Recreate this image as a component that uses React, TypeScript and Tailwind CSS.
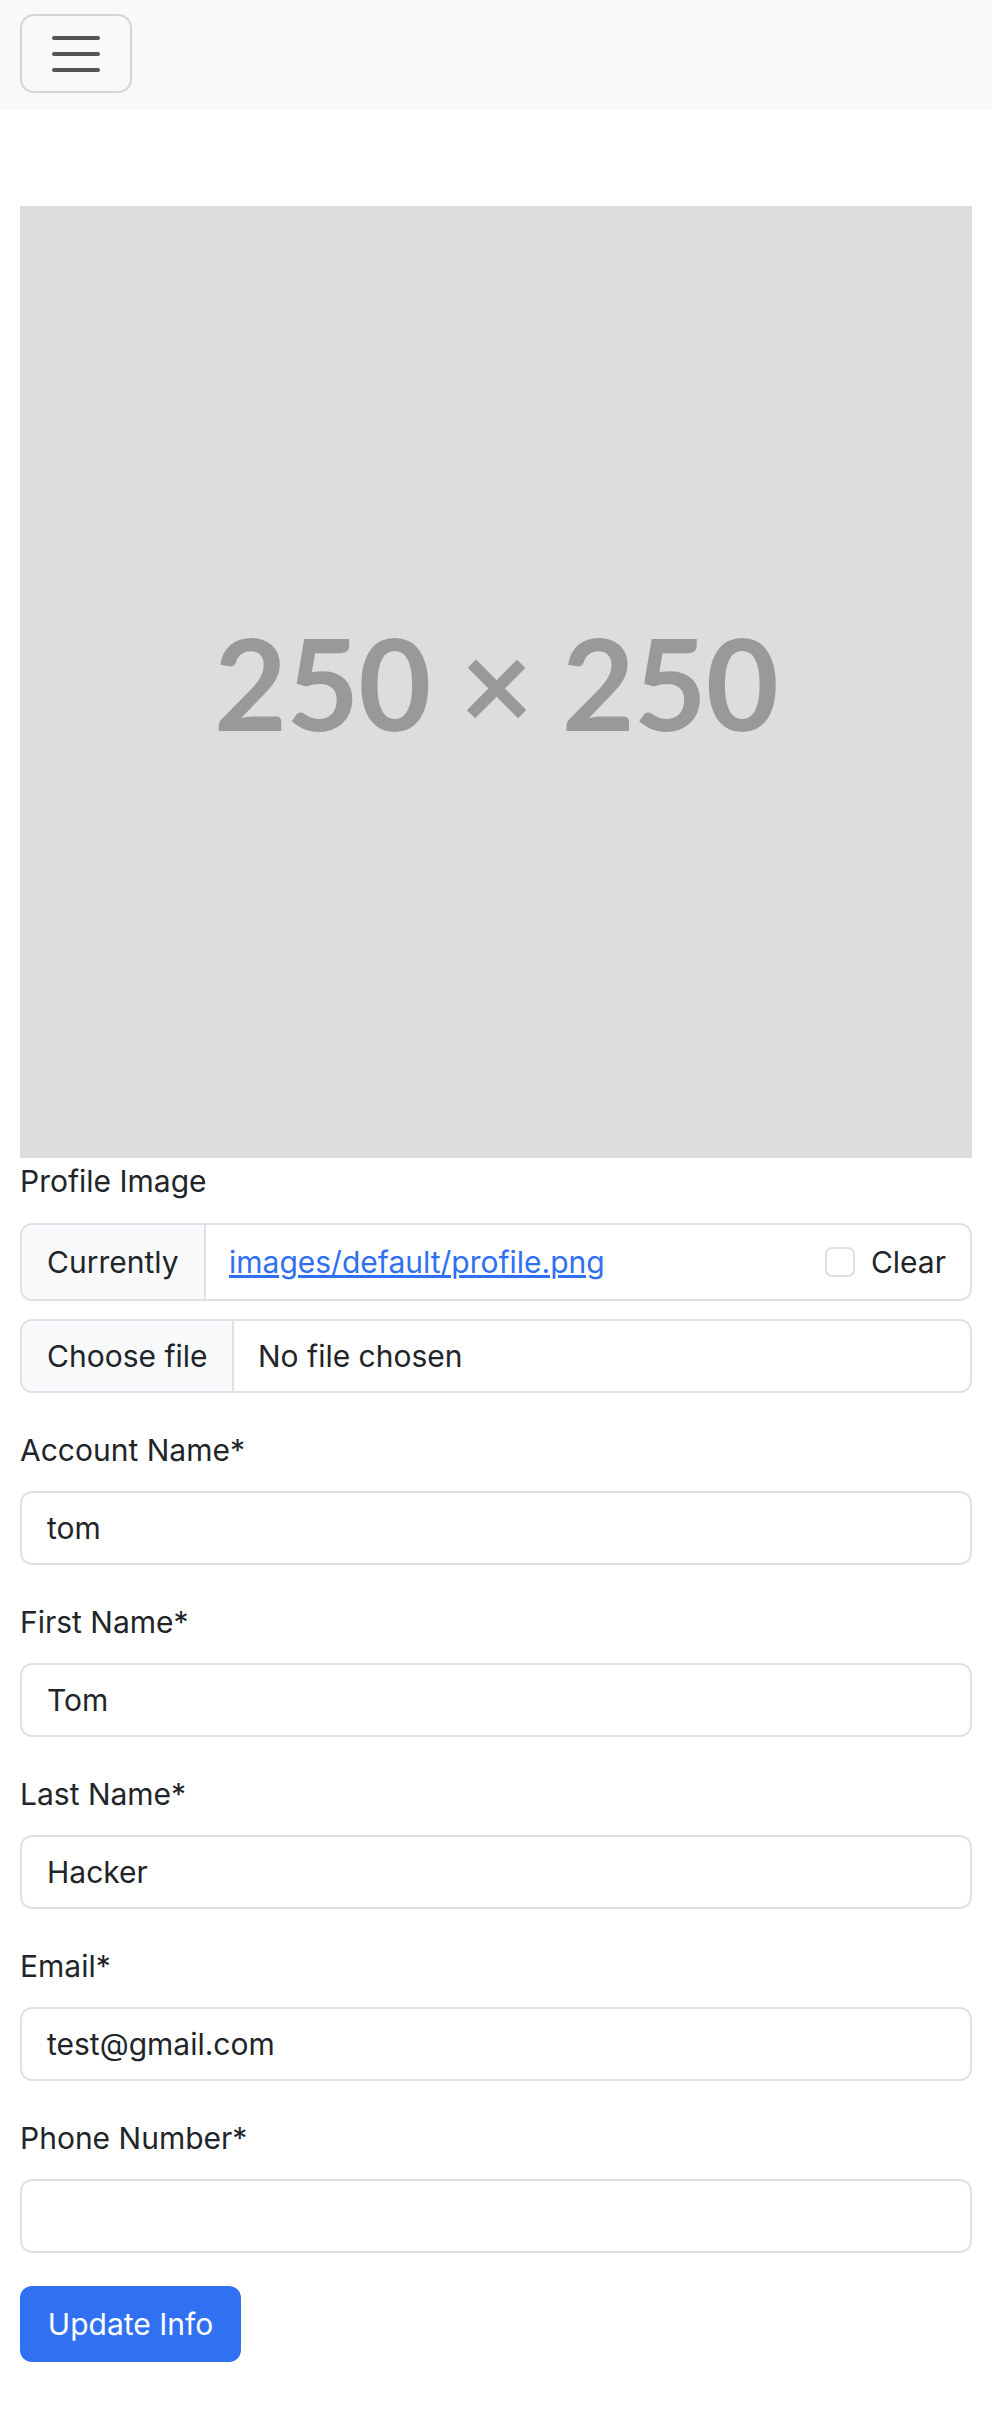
import React from "react";

const fields = [
  { label: "Account Name*", value: "tom" },
  { label: "First Name*", value: "Tom" },
  { label: "Last Name*", value: "Hacker" },
  { label: "Email*", value: "test@gmail.com" },
  { label: "Phone Number*", value: "" },
];

export default function App() {
  return (
    <div className="min-h-[2430px] bg-white font-['Inter',sans-serif] text-[30px] text-[#212529]">
      <nav className="h-[109px] bg-[#f8f9fa] px-5 pt-[14px]">
        <button className="flex h-[79px] w-[112px] flex-col items-center justify-center gap-[12px] rounded-[14px] border-2 border-[#d4d5d7]">
          <span className="h-[4px] w-[48px] rounded-full bg-[#545454]" />
          <span className="h-[4px] w-[48px] rounded-full bg-[#545454]" />
          <span className="h-[4px] w-[48px] rounded-full bg-[#545454]" />
        </button>
      </nav>

      <main className="px-5 pt-[97px]">
        <div className="flex aspect-square w-full items-center justify-center bg-[#dddddd]">
          <span className="font-['Lato',sans-serif] text-[126px] font-bold tracking-[-1px] text-[#999999]">
            250 × 250
          </span>
        </div>

        <label className="block leading-[47px]">Profile Image</label>
        <div className="mt-[18px] flex h-[78px] overflow-hidden rounded-[12px] border-2 border-[#dee2e6]">
          <div className="flex w-[184px] items-center border-r-2 border-[#dee2e6] bg-[#f8f9fa] pl-[25px]">
            Currently
          </div>
          <div className="flex flex-1 items-center pl-[23px] pr-[24px]">
            <a href="#" className="text-[#2f6ff2] underline">
              images/default/profile.png
            </a>
            <span className="ml-auto h-[30px] w-[30px] rounded-[7px] border-2 border-[#dee2e6]" />
            <span className="ml-[16px]">Clear</span>
          </div>
        </div>
        <div className="mt-[18px] flex h-[74px] overflow-hidden rounded-[12px] border-2 border-[#dee2e6]">
          <div className="flex w-[212px] items-center border-r-2 border-[#dee2e6] bg-[#f8f9fa] pl-[25px]">
            Choose file
          </div>
          <div className="flex flex-1 items-center pl-[24px]">No file chosen</div>
        </div>

        <div className="mt-[34px] flex flex-col gap-[34px]">
          {fields.map((f) => (
            <div key={f.label}>
              <label className="block leading-[47px]">{f.label}</label>
              <div className="mt-[17px] flex h-[74px] items-center rounded-[12px] border-2 border-[#dee2e6] px-[25px]">
                {f.value}
              </div>
            </div>
          ))}
        </div>

        <button className="mt-[33px] flex h-[76px] w-[221px] items-center justify-center rounded-[12px] bg-[#3270f2] text-white">
          Update Info
        </button>
      </main>
    </div>
  );
}
